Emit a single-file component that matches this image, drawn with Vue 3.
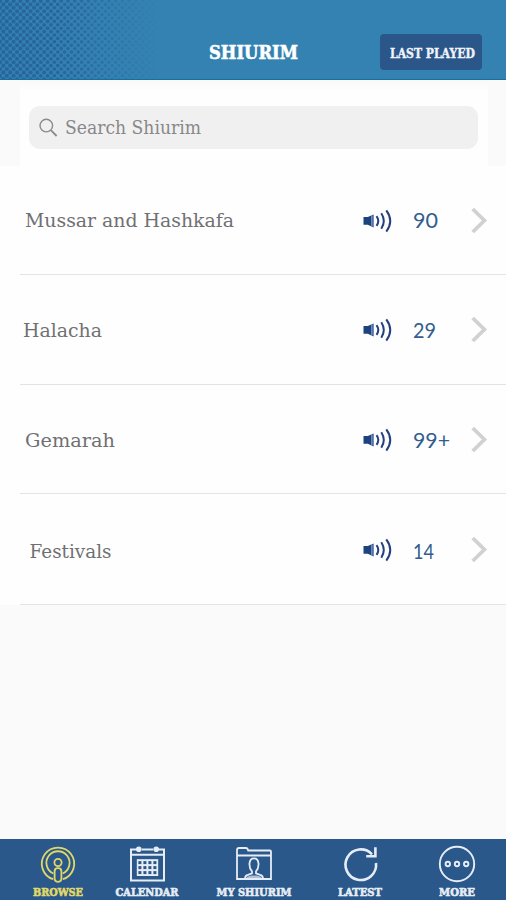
<script setup>
const rows = [
  { name: 'Mussar and Hashkafa', width: 209, x: 25, y: 19, count: '90', countWidth: 25, height: 109 },
  { name: 'Halacha', width: 79, x: 23, y: 19.5, count: '29', countWidth: 23, height: 110 },
  { name: 'Gemarah', width: 90, x: 25, y: 19.5, count: '99+', countWidth: 37, height: 109 },
  { name: 'Festivals', width: 82, x: 29.5, y: 20.5, count: '14', countWidth: 21, height: 111 }
]

const pitch = 6.8
const dots = []
for (let r = 0; r < 25; r++) {
  for (let c = 0; c < 24; c++) {
    const x = c * pitch + (r % 2 ? pitch / 2 : 0)
    const y = r * (pitch / 2) + 1
    if (x > 158 || y > 80) continue
    const t = x / 158
    dots.push({ x, y, r: 2.1 - t * 0.8, o: Math.min(0.75, (1 - t) * 1.2) })
  }
}
</script>

<template>
  <div class="screen">
    <header class="header">
      <svg class="pattern" width="160" height="79" viewBox="0 0 160 79">
        <circle v-for="(d, i) in dots" :key="i" :cx="d.x" :cy="d.y" :r="d.r" :opacity="d.o" fill="#265b98" />
      </svg>
      <h1 class="title">
        <svg width="96" height="26"><text x="1" y="19" textLength="89" lengthAdjust="spacingAndGlyphs">SHIURIM</text></svg>
      </h1>
      <button class="last">
        <svg width="94" height="24"><text x="5" y="16.5" textLength="85" lengthAdjust="spacingAndGlyphs">LAST PLAYED</text></svg>
      </button>
    </header>

    <section class="search-area">
      <div class="search">
        <svg class="glass" width="20" height="20" viewBox="0 0 20 20" fill="none" stroke="#8b8b8e">
          <circle cx="7.3" cy="7.6" r="6.3" stroke-width="1.4" />
          <path d="M11.9 12.2L17.6 18" stroke-width="1.8" />
        </svg>
        <svg class="placeholder" width="150" height="30"><text x="0" y="19" textLength="136" lengthAdjust="spacingAndGlyphs">Search Shiurim</text></svg>
      </div>
    </section>

    <main class="list">
      <div v-for="row in rows" :key="row.name" class="row" :style="{ height: row.height + 'px' }">
        <svg class="name" width="340" height="26">
          <text :x="row.x" :y="row.y" :textLength="row.width" lengthAdjust="spacingAndGlyphs">{{ row.name }}</text>
        </svg>
        <svg class="sound" width="32" height="26" viewBox="0 0 32 26" fill="none" stroke="#24407e">
          <path d="M1.5 9.1H5.8L11.6 6.4V19.4L5.8 16.8H1.5Z" fill="#1c437f" stroke="none" />
          <path d="M9.9 7.4V18.5" stroke="#b9cade" stroke-width=".9" />
          <path d="M14.5 8.2Q18.1 13 14.5 17.9" stroke-width="2" />
          <path d="M19.3 5.3Q24.3 13 19.3 20.7" stroke-width="2" />
          <path d="M24.3 2.4Q32.2 13 24.3 23.6" stroke-width="2" />
        </svg>
        <svg class="count" width="44" height="26">
          <text x="0" :y="row.y + 1" :textLength="row.countWidth" lengthAdjust="spacingAndGlyphs">{{ row.count }}</text>
        </svg>
        <svg class="chevron" width="18" height="28" viewBox="0 0 18 28" fill="none" stroke="#d1d1d2" stroke-width="3.8">
          <path d="M2.7 2L14.4 13.5L2.7 25" />
        </svg>
      </div>
    </main>

    <nav class="tabs">
      <a class="tab browse">
        <svg width="38" height="38" viewBox="0 0 38 38" fill="none" stroke="currentColor" stroke-width="1.8">
          <path d="M14.2 34.2A16.2 16.2 0 1 1 23.8 34.2" />
          <path d="M14.4 28.5A11.6 11.6 0 1 1 23.6 28.5" />
          <circle cx="19" cy="17.5" r="3.6" />
          <rect x="15.6" y="23.2" width="6.8" height="13.6" rx="3.2" />
        </svg>
        <svg class="label" width="60" height="15"><text x="5" y="11" textLength="50" lengthAdjust="spacingAndGlyphs">BROWSE</text></svg>
      </a>
      <a class="tab calendar">
        <svg width="38" height="38" viewBox="0 0 38 38" fill="none" stroke="currentColor" stroke-width="2">
          <path d="M9 4.5H3V35.5H36V4.5H30M14 4.5H25M3 9.8H36" />
          <circle cx="10.8" cy="4.3" r="2.8" fill="currentColor" stroke="none" />
          <circle cx="28.2" cy="4.3" r="2.8" fill="currentColor" stroke="none" />
          <rect x="8.8" y="14.2" width="21.4" height="16.8" fill="currentColor" stroke="none" />
          <g fill="#2b588b" stroke="none">
            <template v-for="y in 3" :key="y">
              <rect v-for="x in 4" :key="x" :x="5.4 + x * 5" :y="11.1 + y * 5" width="3" height="3" />
            </template>
          </g>
        </svg>
        <svg class="label" width="72" height="15"><text x="4.5" y="11" textLength="63" lengthAdjust="spacingAndGlyphs">CALENDAR</text></svg>
      </a>
      <a class="tab mine">
        <svg width="38" height="38" viewBox="0 0 38 38" fill="none" stroke="currentColor" stroke-width="1.8">
          <path d="M2 34V5Q2 3 4 3H11Q12.5 3 13.2 5.5H35Q36 5.5 36 7V34ZM2 10.5H36" />
          <path d="M10 33.5Q10 30.5 13 29.8L17 28.3V26.3C13.5 22.5 13.2 13.3 19 13.3S24.5 22.5 21 26.3V28.3L25 29.8Q28 30.5 28 33.5" />
          <path d="M11 33.5Q12 31 16.3 30.4H21.7Q26 31 27 33.5Z" fill="currentColor" stroke="none" opacity=".7" />
        </svg>
        <svg class="label" width="84" height="15"><text x="4.5" y="11" textLength="75" lengthAdjust="spacingAndGlyphs">MY SHIURIM</text></svg>
      </a>
      <a class="tab latest">
        <svg width="38" height="38" viewBox="0 0 38 38" fill="none" stroke="currentColor" stroke-width="2.6">
          <path d="M31 9.3A15.3 15.3 0 1 0 35 18" />
          <path d="M34.4 2.2V11.3H25.2" />
        </svg>
        <svg class="label" width="52" height="15"><text x="4" y="11" textLength="44" lengthAdjust="spacingAndGlyphs">LATEST</text></svg>
      </a>
      <a class="tab more">
        <svg width="38" height="38" viewBox="0 0 38 38" fill="none" stroke="currentColor" stroke-width="1.9">
          <circle cx="19" cy="19" r="17.2" />
          <circle cx="9.8" cy="19" r="2.2" />
          <circle cx="19" cy="19" r="2.2" />
          <circle cx="28.2" cy="19" r="2.2" />
        </svg>
        <svg class="label" width="46" height="15"><text x="5" y="11" textLength="36" lengthAdjust="spacingAndGlyphs">MORE</text></svg>
      </a>
    </nav>
  </div>
</template>

<style>
body { margin: 0; }
</style>

<style scoped>
.screen {
  width: 506px;
  height: 900px;
  display: flex;
  flex-direction: column;
  background: #fafafa;
  font-family: "DejaVu Serif", serif;
  overflow: hidden;
}
svg { display: block; flex: none; overflow: visible; }
.header {
  position: relative;
  box-sizing: border-box;
  height: 80px;
  flex: none;
  display: flex;
  padding: 34px 24px 0 208px;
  justify-content: space-between;
  background: #3382b1;
  border-bottom: 1px solid #16709f;
}
.pattern { position: absolute; left: 0; top: 0; overflow: hidden; }
.title { margin: 6px 0 0; }
.title text { font: bold 18px "DejaVu Serif", serif; fill: #fff; stroke: #fff; stroke-width: .6px; }
.last {
  width: 102px;
  height: 36px;
  box-sizing: border-box;
  padding: 1px 0 0 2px;
  border: 0;
  border-radius: 4px;
  background: #2a568a;
  display: flex;
  align-items: center;
  justify-content: center;
}
.last text { font: bold 12.5px "DejaVu Serif", serif; fill: #f0f3fa; stroke: #f0f3fa; stroke-width: .4px; }
.search-area {
  height: 86px;
  flex: none;
  box-sizing: border-box;
  padding: 26px 28px 0 29px;
  background: linear-gradient(#f9f9fa, #fefefe 12px) 20px 0 / 468px 86px no-repeat #fafafa;
}
.search {
  height: 43px;
  border-radius: 11px;
  background: #f0f0f0;
  display: flex;
  align-items: flex-start;
}
.glass { margin: 12px 0 0 10px; }
.placeholder { margin: 9px 0 0 6px; }
.placeholder text { font-size: 18px; fill: #88888a; }
.list { background: #fefefe; flex: none; }
.row {
  box-sizing: border-box;
  display: flex;
  align-items: center;
  background: linear-gradient(#e4e4e5, #e4e4e5) 20px 100% / 486px 1.5px no-repeat;
}
.name { margin-right: 22px; }
.name text { font-size: 19px; fill: #707072; }
.sound { margin-right: 19px; }
.count { margin-right: 13px; }
.count text { font: 21px Lato, sans-serif; fill: #335d8e; }
.tabs {
  margin-top: auto;
  height: 61px;
  flex: none;
  display: grid;
  grid-template-columns: 103px 88px 125px 88px 102px;
  background: #2b588b;
  color: #e6edf6;
}
.tab {
  display: flex;
  flex-direction: column;
  align-items: center;
  padding-top: 6px;
}
.browse { color: #e0d867; padding-left: 13px; }
.more { padding-left: 4px; }
.label { margin-top: 2px; }
.label text { font: bold 11px "DejaVu Serif", serif; fill: currentColor; stroke: currentColor; stroke-width: .6px; }
</style>
